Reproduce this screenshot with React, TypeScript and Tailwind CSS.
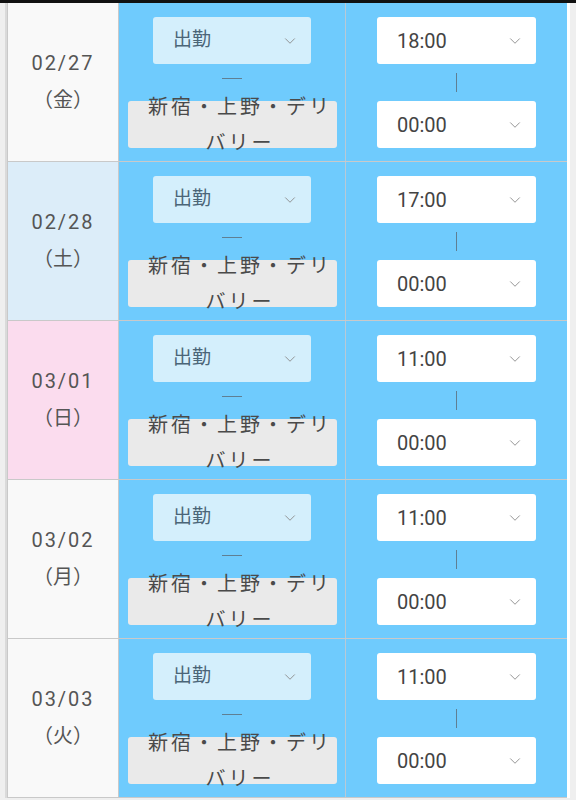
import { ChevronDown } from 'lucide-react';

type Day = {
	date: string;
	weekday: string;
	start: string;
	tone: 'plain' | 'sat' | 'sun';
};

const days: Day[] = [
	{ date: '02/27', weekday: '金', start: '18:00', tone: 'plain' },
	{ date: '02/28', weekday: '土', start: '17:00', tone: 'sat' },
	{ date: '03/01', weekday: '日', start: '11:00', tone: 'sun' },
	{ date: '03/02', weekday: '月', start: '11:00', tone: 'plain' },
	{ date: '03/03', weekday: '火', start: '11:00', tone: 'plain' },
];

const toneClass = {
	plain: 'bg-[#f9f9f9]',
	sat: 'bg-[#dcedf9]',
	sun: 'bg-[#fbdcee]',
};

function Select({ label, className }: { label: string; className: string }) {
	return (
		<div
			className={`flex h-[47px] items-center justify-between rounded-[3px] pl-5 pr-3 ${className}`}
		>
			<span>{label}</span>
			<ChevronDown size={18} strokeWidth={1.2} className="text-[#8a8a8a]" />
		</div>
	);
}

function ShiftRow({ day }: { day: Day }) {
	return (
		<div className="flex h-[159px] border-b border-[#c9c9c9]">
			<div
				className={`flex w-[111px] flex-col items-center justify-center border-r border-[#c9c9c9] text-[20px] leading-[37px] tracking-[2px] text-[#555] ${toneClass[day.tone]}`}
			>
				<span>{day.date}</span>
				<span className="tracking-normal">（{day.weekday}）</span>
			</div>

			<div className="flex w-[227px] flex-col items-center border-r border-[#b9c9d6] bg-[#6fcbfd] pt-[14px]">
				<Select
					label="出勤"
					className="w-[158px] bg-[#d4effc] text-[19px] text-[#4b6577]"
				/>
				<div className="h-[37px] pt-[14px]">
					<div className="h-px w-[20px] bg-[#5f7f93]" />
				</div>
				<div className="flex h-[47px] w-[209px] items-center justify-center rounded-[3px] bg-[#eaeaea] pl-4 text-center text-[20px] leading-[36px] tracking-[3px] text-[#4a4a4a]">
					<span className="block w-[192px]">新宿・上野・デリバリー</span>
				</div>
			</div>

			<div className="flex w-[221px] flex-col items-center bg-[#6fcbfd] pt-[14px]">
				<Select
					label={day.start}
					className="w-[159px] bg-white text-[20px] text-[#444]"
				/>
				<div className="flex h-[37px] items-center">
					<div className="h-[19px] w-px bg-[#5f7f93]" />
				</div>
				<Select
					label="00:00"
					className="w-[159px] bg-white text-[20px] text-[#444]"
				/>
			</div>
		</div>
	);
}

export default function App() {
	return (
		<div
			className="h-[800px] overflow-hidden bg-[#efefef]"
			style={{ fontFamily: 'Roboto, "Noto Sans CJK JP", sans-serif' }}
		>
			<div className="h-[3px] bg-[#111]" />
			<div className="flex">
				<div className="w-[5px]" />
				<div className="w-[2px] bg-[#dadada]" />
				<div className="w-[560px] border-l border-[#c9c9c9]">
					{days.map((day) => (
						<ShiftRow key={day.date} day={day} />
					))}
				</div>
				<div className="w-[3px] bg-white" />
			</div>
		</div>
	);
}
